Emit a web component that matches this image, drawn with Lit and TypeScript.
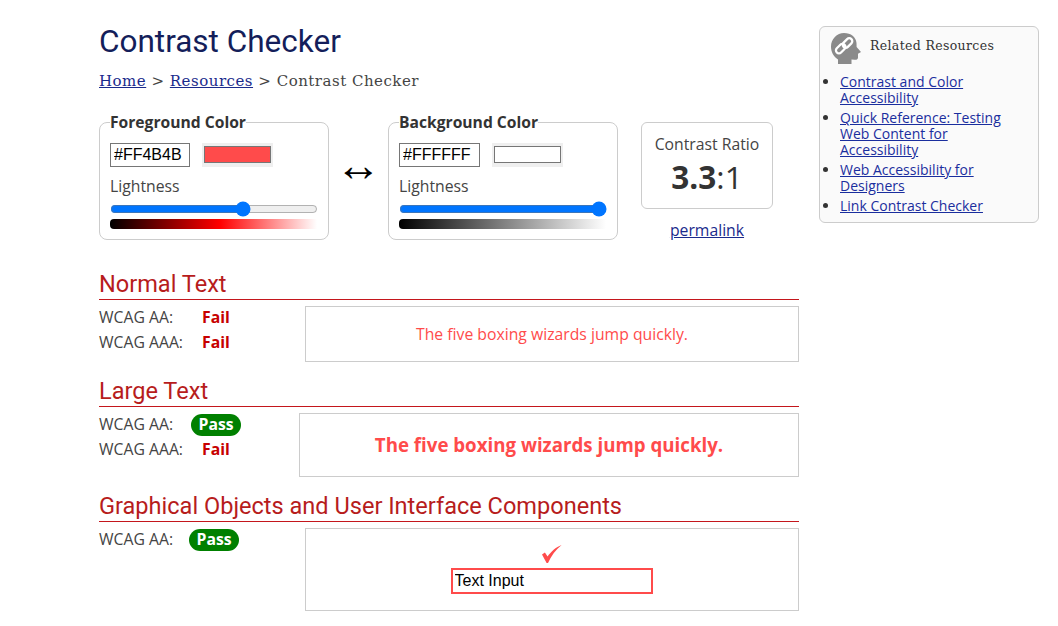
import { LitElement, css, html } from 'lit';
import { customElement } from 'lit/decorators.js';

const SAMPLE = 'The five boxing wizards jump quickly.';

@customElement('app-root')
export class AppRoot extends LitElement {
  private picker(title: string, hex: string, value: number, cls: string) {
    return html`
      <fieldset class="picker ${cls}">
        <legend>${title}</legend>
        <div class="color-row">
          <input class="hex" type="text" .value=${hex}>
          <input class="swatch" type="color" .value=${hex}>
        </div>
        <div class="light-label">Lightness</div>
        <input class="slider" type="range" min="0" max="100" step="0.5" .value=${String(value)}>
        <div class="ramp"></div>
      </fieldset>
    `;
  }

  private result(label: string, pass: boolean, pillClass = '') {
    return html`
      <div class="result">
        <span class="result-label">${label}</span>
        ${pass
          ? html`<span class="pill ${pillClass}">Pass</span>`
          : html`<span class="fail">Fail</span>`}
      </div>
    `;
  }

  render() {
    return html`
      <main>
        <h1>Contrast Checker</h1>
        <nav class="crumbs">
          <a href="#">Home</a> &gt; <a href="#">Resources</a> &gt; Contrast Checker
        </nav>

        <div class="tools">
          ${this.picker('Foreground Color', '#FF4B4B', 65, 'picker-fg')}
          <div class="swap">↔</div>
          ${this.picker('Background Color', '#FFFFFF', 100, 'picker-bg')}
          <div class="ratio-col">
            <div class="ratio">
              <div class="ratio-label">Contrast Ratio</div>
              <div class="ratio-value"><b>3.3</b>:1</div>
            </div>
            <a class="permalink" href="#">permalink</a>
          </div>
        </div>

        <section class="normal">
          <h2>Normal Text</h2>
          <div class="body">
            <div class="results">
              ${this.result('WCAG AA:', false)}
              ${this.result('WCAG AAA:', false)}
            </div>
            <div class="sample sample-normal">${SAMPLE}</div>
          </div>
        </section>

        <section class="large">
          <h2>Large Text</h2>
          <div class="body">
            <div class="results">
              ${this.result('WCAG AA:', true)}
              ${this.result('WCAG AAA:', false)}
            </div>
            <div class="sample sample-large">${SAMPLE}</div>
          </div>
        </section>

        <section class="graphic">
          <h2>Graphical Objects and User Interface Components</h2>
          <div class="body">
            <div class="results">
              ${this.result('WCAG AA:', true, 'pill-tight')}
            </div>
            <div class="sample sample-graphic">
              <svg class="check" width="20" height="19" viewBox="0 0 20 19">
                <path fill="#ff4b4b" d="M0 9.6 L2.9 7.6 L5.6 11.6 C8.6 7 14 2 19.6 0 C14 4.6 9 11 6 18 L4.6 18 Z"/>
              </svg>
              <input class="text-input" type="text" value="Text Input">
            </div>
          </div>
        </section>
      </main>

      <aside>
        <div class="aside-head">
          <svg width="30" height="31" viewBox="0 0 30 31">
            <path fill="#8a8a8a" d="M13 0 C20 0 25 4 25.5 10 L25.6 14 L30 19 L27 20.8 L27 24.5 C27 26.5 25.5 27 23.5 26.8 L20.5 26.5 L20.5 31 L7 31 L7 26.5 C2.5 23.5 0 19 0 13.5 C0 6 6 0 13 0 Z"/>
            <g fill="none" stroke="#fff" stroke-width="2.3">
              <rect x="4.2" y="12.6" width="11" height="6" rx="3" transform="rotate(-45 9.7 15.6)"/>
              <rect x="11" y="7" width="11" height="6" rx="3" transform="rotate(-45 16.5 10)"/>
            </g>
          </svg>
          <span>Related Resources</span>
        </div>
        <ul>
          <li><a href="#">Contrast and Color Accessibility</a></li>
          <li><a href="#">Quick Reference: Testing Web Content for Accessibility</a></li>
          <li><a href="#">Web Accessibility for Designers</a></li>
          <li><a href="#">Link Contrast Checker</a></li>
        </ul>
      </aside>
    `;
  }

  static styles = css`
    :host {
      display: flex;
      align-items: flex-start;
      gap: 20px;
      height: 626px;
      box-sizing: border-box;
      padding-left: 99px;
      overflow: hidden;
      background: #fff;
      color: #333;
      font-family: "Open Sans", sans-serif;
      font-size: 15.75px;
    }

    main {
      width: 700px;
      flex: none;
    }

    h1 {
      margin: 21px 0 0;
      font-family: Roboto, sans-serif;
      font-size: 31.5px;
      line-height: 42px;
      font-weight: 400;
      color: #141e5a;
    }

    .crumbs {
      margin-top: 7px;
      font-family: "DejaVu Serif", serif;
      font-size: 15px;
      letter-spacing: 0.5px;
      line-height: 22px;
      color: #444;
    }

    .crumbs a, .permalink {
      color: #1a2a8c;
    }

    .tools {
      display: flex;
      align-items: flex-start;
      margin-top: 20px;
    }

    .picker {
      width: 230px;
      height: 128px;
      box-sizing: border-box;
      margin: 0;
      padding: 0 10px;
      border: 1px solid #ccc;
      border-radius: 8px;
    }

    legend {
      padding: 0;
      font-size: 15.65px;
      font-weight: 700;
      line-height: 20px;
      color: #333;
    }

    .color-row {
      display: flex;
      gap: 12px;
      margin-top: 11px;
    }

    .hex {
      width: 80px;
      height: 24px;
      box-sizing: border-box;
      padding: 0 3px;
      border: 1px solid #767676;
      border-radius: 0;
      font-family: "Liberation Sans", sans-serif;
      font-size: 16px;
      color: #000;
    }

    .picker-bg .hex {
      width: 81px;
    }

    .swatch {
      width: 71px;
      height: 24px;
      box-sizing: border-box;
      padding: 0;
      border: 0;
      background: #efefef;
    }

    .swatch::-webkit-color-swatch-wrapper {
      padding: 3px 2px 4px;
    }

    .swatch::-webkit-color-swatch {
      border: 1px solid #767676;
    }

    .light-label {
      margin-top: 7px;
      line-height: 24px;
      color: #444;
    }

    .slider {
      display: block;
      width: 208px;
      height: 16px;
      margin: 3px 0 0;
      accent-color: #0075ff;
    }

    .ramp {
      width: 207px;
      height: 10px;
      margin-top: 2px;
      border-radius: 4px 0 0 4px;
    }

    .picker-fg .ramp {
      background: linear-gradient(to right, #000, #f00 53%, #fff);
    }

    .picker-bg .ramp {
      background: linear-gradient(to right, #000, #fff);
    }

    .swap {
      width: 59px;
      height: 128px;
      box-sizing: border-box;
      padding-top: 33px;
      text-align: center;
      font-family: "Liberation Sans", sans-serif;
      font-size: 46px;
      line-height: 40px;
      color: #000;
    }

    .ratio-col {
      display: flex;
      flex-direction: column;
      width: 132px;
      margin: 10px 0 0 23px;
      text-align: center;
    }

    .ratio {
      height: 87px;
      box-sizing: border-box;
      padding-top: 10px;
      border: 1px solid #ccc;
      border-radius: 6px;
    }

    .ratio-label {
      line-height: 22px;
      color: #444;
    }

    .ratio-value {
      font-size: 31.5px;
      line-height: 44px;
    }

    .permalink {
      margin-top: 10px;
      line-height: 22px;
    }

    section {
      margin-top: 15px;
    }

    section.normal {
      margin-top: 29px;
    }

    h2 {
      margin: 0;
      height: 30px;
      box-sizing: border-box;
      border-bottom: 1px solid #c4161c;
      font-family: Roboto, sans-serif;
      font-size: 23.55px;
      line-height: 28px;
      font-weight: 400;
      color: #b71c1c;
    }

    .body {
      display: flex;
      margin-top: 6px;
      justify-content: space-between;
    }

    .results {
      margin-top: -2px;
    }

    .result {
      display: flex;
      align-items: center;
      height: 25px;
      color: #444;
    }

    .result-label {
      width: 103px;
      flex: none;
    }

    .fail {
      font-weight: 700;
      color: #c70000;
    }

    .pill {
      height: 22px;
      margin: 2px 0 0 -11px;
      padding: 0 7.5px;
      border-radius: 11px;
      background: #008000;
      color: #fff;
      font-weight: 700;
      line-height: 20px;
    }

    .pill-tight {
      margin-left: -13px;
    }

    .sample {
      display: flex;
      align-items: center;
      justify-content: center;
      box-sizing: border-box;
      border: 1px solid #ccc;
      color: #ff4b4b;
    }

    .sample-normal {
      width: 494px;
      height: 56px;
    }

    .sample-large {
      width: 500px;
      height: 64px;
      padding-bottom: 2px;
      font-size: 18.7px;
      font-weight: 700;
    }

    .sample-graphic {
      flex-direction: column;
      justify-content: flex-start;
      width: 494px;
      height: 83px;
      padding-top: 16px;
    }

    .check {
      display: block;
    }

    .text-input {
      width: 202px;
      height: 26px;
      box-sizing: border-box;
      margin: 4px 0 0 -1px;
      padding: 0 2px;
      border: 2px solid #ff4b4b;
      border-radius: 0;
      font-family: "Liberation Sans", sans-serif;
      font-size: 16px;
      color: #000;
    }

    aside {
      width: 220px;
      height: 197px;
      flex: none;
      box-sizing: border-box;
      margin-top: 26px;
      padding: 6px 11px 0;
      border: 1px solid #ccc;
      border-radius: 6px;
      background: #fafafa;
    }

    .aside-head {
      display: flex;
      align-items: flex-start;
      gap: 9px;
      height: 32px;
      font-family: "DejaVu Serif", serif;
      font-size: 12.5px;
      letter-spacing: 0.35px;
      line-height: 26px;
      color: #333;
    }

    ul {
      margin: 9px 0 0;
      padding: 0 0 0 9px;
      font-size: 14px;
      line-height: 16px;
    }

    li {
      margin-bottom: 4px;
    }

    li a {
      color: #1a2e9e;
    }
  `;
}

declare global {
  interface HTMLElementTagNameMap {
    'app-root': AppRoot;
  }
}
